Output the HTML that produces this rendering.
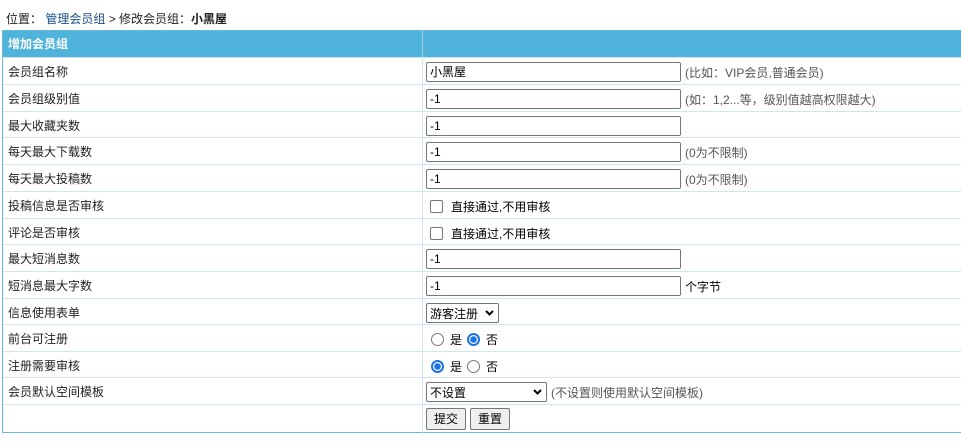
<!DOCTYPE html>
<html><head><meta charset="utf-8"><style>
*{box-sizing:border-box;margin:0;padding:0}
body{width:961px;height:446px;background:#fff;font-family:"Liberation Sans","Noto Sans CJK SC",sans-serif;font-size:12px;color:#222;position:relative;overflow:hidden}
.pos{position:absolute;left:6px;top:10px;font-size:12px}
.pos a{color:#1a4f8a;text-decoration:none}
.tbl{position:absolute;left:2px;top:30px;width:962px;height:403px;border:1px solid #6fb7d8;border-right:none}
.hd{position:absolute;left:0;top:0;width:100%;height:26px;background:#4fb3dc;color:#fff;font-weight:bold;line-height:26px;padding-left:5px}
.vl{position:absolute;left:419px;top:0;width:1px;height:100%;background:#cfe6f2}
.row{position:absolute;left:0;width:100%;border-top:1px solid #cfe6f2;height:27px}
.l{position:absolute;left:5px;top:1px;line-height:26px;font-size:12px}
.r{position:absolute;left:423px;top:1px;height:26px;display:flex;align-items:center;white-space:nowrap;color:#555}
.in{width:255px;height:20px;border:1px solid #767676;border-radius:2px;padding-left:3px;line-height:18px;color:#000;margin-right:4px;font-size:12px}
.cb{width:13px;height:13px;border:1px solid #767676;border-radius:2px;margin:0 8px 0 4px}
.rd{width:13px;height:13px;border:1px solid #767676;border-radius:50%;margin:0 6px 0 5px}
.rd.on{border:2px solid #1a73e8;background:radial-gradient(#1a73e8 3px,#fff 3.5px)}
.sel{height:20px;border:1px solid #767676;border-radius:2px;padding:0 4px 0 3px;display:flex;align-items:center;color:#000;justify-content:space-between}
.btn{height:22px;border:1px solid #767676;border-radius:2px;background:#efefef;color:#000;padding:0 7px;line-height:20px;margin-right:4px}
.t{color:#000}
</style></head><body>
<div class="pos">位置： <a>管理会员组</a> &gt; 修改会员组：<b>小黑屋</b></div>
<div class="tbl">
<div class="hd">增加会员组</div>
<div class="vl" style="top:0;height:26px;background:#9fd3ea"></div>
<div class="vl" style="top:26px;height:376px"></div>
<div class="row" style="top:26px"><div class="l">会员组名称</div><div class="r"><div class="in">小黑屋</div>(比如：VIP会员,普通会员)</div></div>
<div class="row" style="top:53px"><div class="l">会员组级别值</div><div class="r"><div class="in">-1</div>(如：1,2...等，级别值越高权限越大)</div></div>
<div class="row" style="top:80px"><div class="l">最大收藏夹数</div><div class="r"><div class="in">-1</div></div></div>
<div class="row" style="top:106px"><div class="l">每天最大下载数</div><div class="r"><div class="in">-1</div>(0为不限制)</div></div>
<div class="row" style="top:133px"><div class="l">每天最大投稿数</div><div class="r"><div class="in">-1</div>(0为不限制)</div></div>
<div class="row" style="top:160px"><div class="l">投稿信息是否审核</div><div class="r"><div class="cb"></div><span class="t">直接通过,不用审核</span></div></div>
<div class="row" style="top:187px"><div class="l">评论是否审核</div><div class="r"><div class="cb"></div><span class="t">直接通过,不用审核</span></div></div>
<div class="row" style="top:213px"><div class="l">最大短消息数</div><div class="r"><div class="in">-1</div></div></div>
<div class="row" style="top:240px"><div class="l">短消息最大字数</div><div class="r"><div class="in">-1</div><span class="t">个字节</span></div></div>
<div class="row" style="top:267px"><div class="l">信息使用表单</div><div class="r"><div class="sel" style="width:73px">游客注册<svg width="9" height="6" viewBox="0 0 9 6"><path d="M1 1l3.5 3.5L8 1" stroke="#000" stroke-width="2" fill="none"/></svg></div></div></div>
<div class="row" style="top:293px"><div class="l">前台可注册</div><div class="r"><div class="rd"></div><span class="t">是</span><div class="rd on"></div><span class="t">否</span></div></div>
<div class="row" style="top:320px"><div class="l">注册需要审核</div><div class="r"><div class="rd on"></div><span class="t">是</span><div class="rd"></div><span class="t">否</span></div></div>
<div class="row" style="top:346px"><div class="l">会员默认空间模板</div><div class="r"><div class="sel" style="width:121px;margin-right:4px">不设置<svg width="9" height="6" viewBox="0 0 9 6"><path d="M1 1l3.5 3.5L8 1" stroke="#000" stroke-width="2" fill="none"/></svg></div>(不设置则使用默认空间模板)</div></div>
<div class="row" style="top:373px"><div class="r"><div class="btn">提交</div><div class="btn">重置</div></div></div>
</div>
</body></html>
